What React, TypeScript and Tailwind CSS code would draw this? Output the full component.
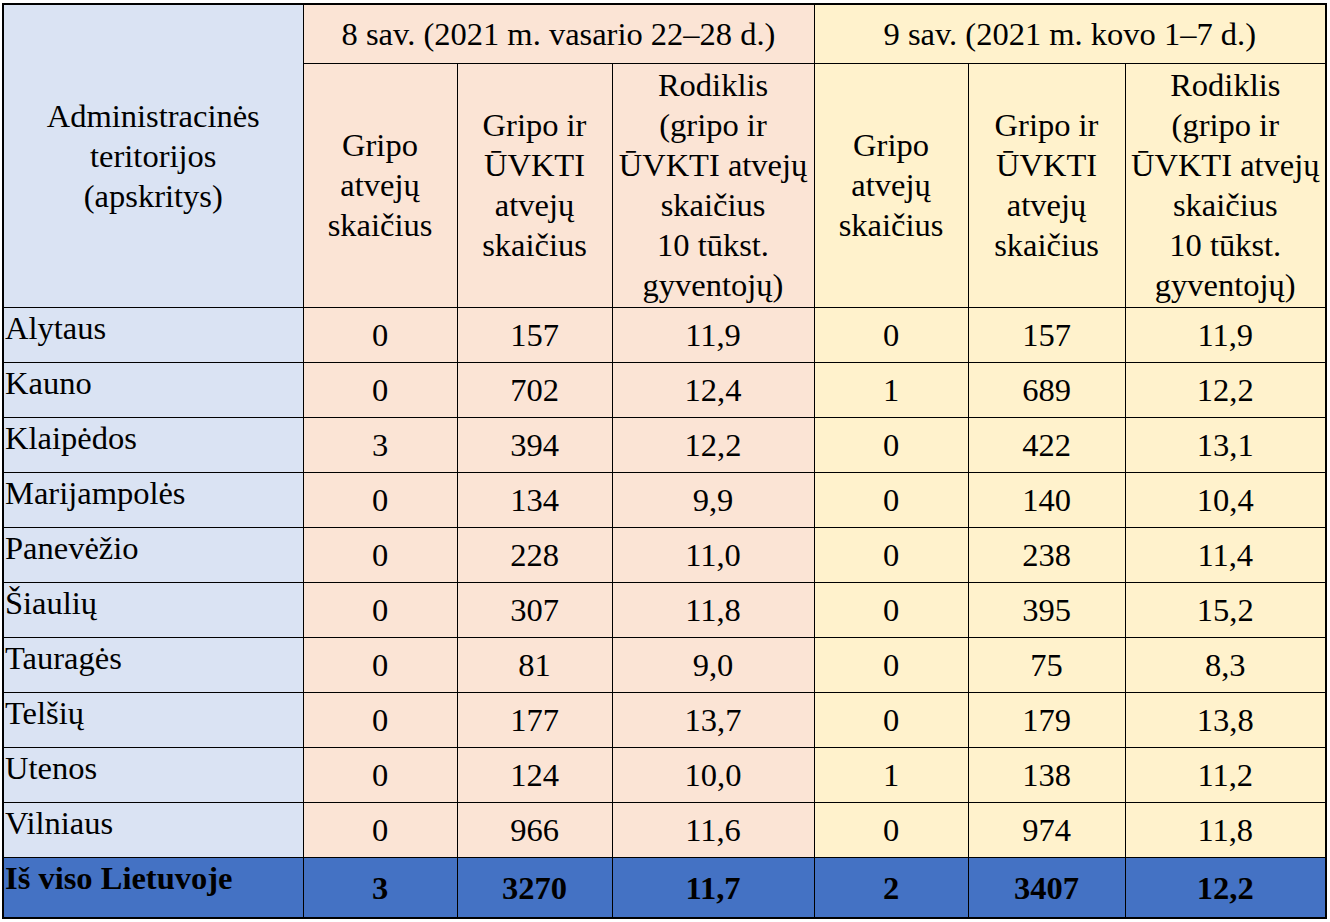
import React from "react";

const data = [
  { name: "Alytaus", v: ["0", "157", "11,9", "0", "157", "11,9"] },
  { name: "Kauno", v: ["0", "702", "12,4", "1", "689", "12,2"] },
  { name: "Klaipėdos", v: ["3", "394", "12,2", "0", "422", "13,1"] },
  { name: "Marijampolės", v: ["0", "134", "9,9", "0", "140", "10,4"] },
  { name: "Panevėžio", v: ["0", "228", "11,0", "0", "238", "11,4"] },
  { name: "Šiaulių", v: ["0", "307", "11,8", "0", "395", "15,2"] },
  { name: "Tauragės", v: ["0", "81", "9,0", "0", "75", "8,3"] },
  { name: "Telšių", v: ["0", "177", "13,7", "0", "179", "13,8"] },
  { name: "Utenos", v: ["0", "124", "10,0", "1", "138", "11,2"] },
  { name: "Vilniaus", v: ["0", "966", "11,6", "0", "974", "11,8"] },
];

const totalVals = ["3", "3270", "11,7", "2", "3407", "12,2"];

const serif = { fontFamily: "'Liberation Serif', 'Times New Roman', serif" };

const peachHead = "border border-black bg-[#fbe4d5] p-0 text-center align-middle font-normal whitespace-nowrap";
const yellowHead = "border border-black bg-[#fff2cc] p-0 text-center align-middle font-normal whitespace-nowrap";
const blueHead = "border border-black bg-[#dae3f3] p-0 text-center align-middle font-normal whitespace-nowrap";
const nameCell = "border border-black bg-[#dae3f3] p-0 pl-[1px] text-left align-top whitespace-nowrap";
const peachCell = "border border-black bg-[#fbe4d5] p-0 text-center align-middle";
const yellowCell = "border border-black bg-[#fff2cc] p-0 text-center align-middle";
const totalName = "border border-black p-0 pl-[1px] text-left align-top whitespace-nowrap font-bold";
const totalCell = "border border-black p-0 pt-[2px] text-center align-middle font-bold";

function Lines(props: { lines: string[] }) {
  return (
    <>
      {props.lines.map((l, i) => (
        <React.Fragment key={i}>
          {i > 0 ? <br /> : null}
          {l}
        </React.Fragment>
      ))}
    </>
  );
}

export default function App() {
  return (
    <div
      className="min-h-[922px] w-[1330px] bg-white pt-[3px] pl-[2px] font-['Liberation_Serif',serif] text-[32.5px] leading-[40px] text-black"
      style={serif}
    >
      <table className="w-[1323px] table-fixed border-collapse border-2 border-black" style={serif}>
        <colgroup>
          <col className="w-[300px]" />
          <col className="w-[154px]" />
          <col className="w-[155px]" />
          <col className="w-[202px]" />
          <col className="w-[154px]" />
          <col className="w-[157px]" />
          <col className="w-[201px]" />
        </colgroup>
        <thead>
          <tr className="h-[59px]">
            <th rowSpan={2} className={blueHead}>
              <Lines lines={["Administracinės", "teritorijos", "(apskritys)"]} />
            </th>
            <th colSpan={3} className={peachHead}>
              8 sav. (2021 m. vasario 22–28 d.)
            </th>
            <th colSpan={3} className={yellowHead}>
              9 sav. (2021 m. kovo 1–7 d.)
            </th>
          </tr>
          <tr className="h-[244px]">
            <th className={peachHead}>
              <Lines lines={["Gripo", "atvejų", "skaičius"]} />
            </th>
            <th className={peachHead}>
              <Lines lines={["Gripo ir", "ŪVKTI", "atvejų", "skaičius"]} />
            </th>
            <th className={peachHead}>
              <Lines lines={["Rodiklis", "(gripo ir", "ŪVKTI atvejų", "skaičius", "10 tūkst.", "gyventojų)"]} />
            </th>
            <th className={yellowHead}>
              <Lines lines={["Gripo", "atvejų", "skaičius"]} />
            </th>
            <th className={yellowHead}>
              <Lines lines={["Gripo ir", "ŪVKTI", "atvejų", "skaičius"]} />
            </th>
            <th className={yellowHead}>
              <Lines lines={["Rodiklis", "(gripo ir", "ŪVKTI atvejų", "skaičius", "10 tūkst.", "gyventojų)"]} />
            </th>
          </tr>
        </thead>
        <tbody>
          {data.map((row) => (
            <tr key={row.name} className="h-[55px]">
              <td className={nameCell}>{row.name}</td>
              {row.v.map((val, i) => (
                <td key={i} className={i < 3 ? peachCell : yellowCell}>
                  {val}
                </td>
              ))}
            </tr>
          ))}
          <tr className="h-[61px] bg-[#4472c4]">
            <td className={totalName}>Iš viso Lietuvoje</td>
            {totalVals.map((val, i) => (
              <td key={i} className={totalCell}>
                {val}
              </td>
            ))}
          </tr>
        </tbody>
      </table>
    </div>
  );
}
